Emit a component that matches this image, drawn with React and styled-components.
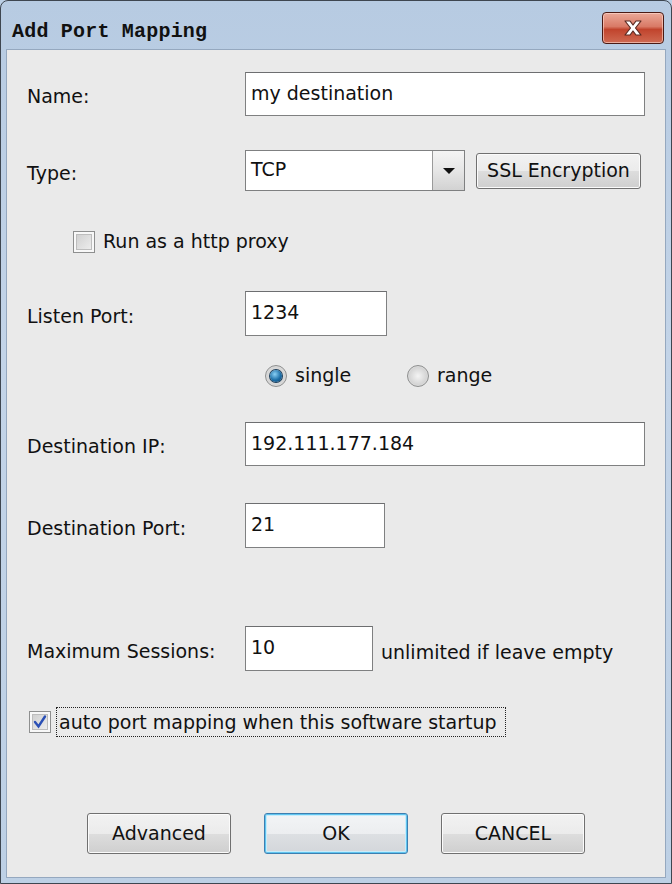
import styled, { createGlobalStyle } from "styled-components";

const GlobalStyle = createGlobalStyle`
  html, body {
    margin: 0;
    padding: 0;
    background: #bcd0e6;
  }
`;

const Window = styled.div`
  width: 672px;
  height: 884px;
  box-sizing: border-box;
  display: flex;
  flex-direction: column;
  background: linear-gradient(180deg, #b7cbe2 0%, #c3d4e8 40%, #bdd0e5 100%);
  border: 1px solid #3e4650;
  border-radius: 8px 8px 0 0;
  padding: 0 5px 5px 5px;
  font-family: "DejaVu Sans", "Liberation Sans", sans-serif;
`;

const TitleBar = styled.div`
  height: 48px;
  display: flex;
  align-items: flex-start;
  justify-content: space-between;
  flex-shrink: 0;
`;

const Title = styled.div`
  font-family: "Liberation Mono", "DejaVu Sans Mono", monospace;
  font-weight: bold;
  font-size: 20px;
  color: #111;
  margin: 19px 0 0 6px;
  letter-spacing: 0.2px;
`;

const CloseButton = styled.div`
  width: 62px;
  height: 32px;
  margin: 11px 2px 0 0;
  box-sizing: border-box;
  border: 1px solid #4a1a14;
  border-radius: 4px;
  background: linear-gradient(180deg, #eaa898 0%, #d97a66 45%, #c1442d 55%, #cf6a52 100%);
  box-shadow: inset 0 0 0 1px rgba(255, 220, 210, 0.6);
  display: flex;
  align-items: center;
  justify-content: center;
`;

const Client = styled.div`
  flex: 1;
  background: #eaeaea;
  border: 1px solid #95a8bf;
  display: flex;
  flex-direction: column;
  padding: 0 0 0 20px;
  color: #111;
  font-size: 19px;
`;

const Row = styled.div`
  display: flex;
  align-items: center;
  margin-top: ${({ $top }) => $top}px;
  margin-left: ${({ $indent }) => $indent || 0}px;
  gap: ${({ $gap }) => $gap || 0}px;
`;

const Label = styled.div`
  width: 218px;
  flex-shrink: 0;
  padding-top: 4px;
`;

const Field = styled.div`
  width: ${({ $w }) => $w}px;
  height: ${({ $h }) => $h}px;
  box-sizing: border-box;
  background: #fff;
  border: 1px solid #7f8081;
  border-top-color: #6d6e70;
  padding: 0 0 3px 5px;
  display: flex;
  align-items: center;
  font-size: 19px;
`;

const Select = styled.div`
  width: 220px;
  height: 41px;
  box-sizing: border-box;
  background: #fff;
  border: 1px solid #7f8081;
  display: flex;
`;

const SelectText = styled.div`
  flex: 1;
  display: flex;
  align-items: center;
  padding: 0 0 3px 5px;
`;

const SelectArrow = styled.div`
  width: 31px;
  border-left: 1px solid #9a9a9a;
  background: linear-gradient(180deg, #f4f4f4 0%, #e6e6e6 50%, #d2d2d2 100%);
  display: flex;
  align-items: center;
  justify-content: center;
  &::after {
    content: "";
    border-left: 6px solid transparent;
    border-right: 6px solid transparent;
    border-top: 6px solid #111;
  }
`;

const Button = styled.div`
  width: ${({ $w }) => $w}px;
  height: ${({ $h }) => $h}px;
  box-sizing: border-box;
  border: 1px solid ${({ $focus }) => ($focus ? "#3c7fb1" : "#707070")};
  border-radius: 3px;
  background: ${({ $focus }) =>
    $focus
      ? "linear-gradient(180deg, #f2f4f6 0%, #eceef0 50%, #dde0e3 51%, #d3d6da 100%)"
      : "linear-gradient(180deg, #f2f2f2 0%, #ebebeb 50%, #dddddd 51%, #cfcfcf 100%)"};
  box-shadow: ${({ $focus }) =>
    $focus ? "inset 0 0 0 1px #5fc4ef, inset 0 0 0 2px #c7ecfb" : "inset 0 0 0 1px #fbfbfb"};
  display: flex;
  align-items: center;
  justify-content: center;
  font-size: 19px;
  color: #111;
  padding-bottom: 2px;
`;

const Box = styled.div`
  width: 22px;
  height: 22px;
  box-sizing: border-box;
  border: 1px solid #8e8f8f;
  box-shadow: inset 0 0 0 2px #f8f8f8, inset 0 0 0 3px #bdbdbd;
  background-image: linear-gradient(135deg, #cbcbcb 0%, #f2f2f2 100%);
  display: flex;
  align-items: center;
  justify-content: center;
  flex-shrink: 0;
`;

const Radio = styled.div`
  width: 22px;
  height: 22px;
  box-sizing: border-box;
  border-radius: 50%;
  border: 1px solid #8e8f8f;
  background: radial-gradient(circle at 50% 50%, #f4f4f4 0%, #d5d5d5 60%, #ececec 100%);
  display: flex;
  align-items: center;
  justify-content: center;
  flex-shrink: 0;
  &::after {
    content: "";
    width: 12px;
    height: 12px;
    border-radius: 50%;
    display: ${({ $on }) => ($on ? "block" : "none")};
    background: radial-gradient(circle at 40% 35%, #8ad0f5 0%, #1d6fa8 55%, #0a3d66 100%);
    box-shadow: 0 0 0 1px #1b3d5a;
  }
`;

const Option = styled.div`
  display: flex;
  align-items: center;
  height: ${({ $h }) => $h || 22}px;
  gap: ${({ $gap }) => $gap ?? 8}px;
  width: ${({ $w }) => $w || "auto"};
`;

const OptionText = styled.span`
  line-height: 22px;
  padding-bottom: 2px;
`;

const FocusText = styled.span`
  border: 1px dotted #222;
  line-height: 22px;
  padding: 3px 8px 3px 2px;
`;

const Hint = styled.span`
  margin-left: 8px;
  padding-top: 6px;
`;

function CloseIcon() {
  return (
    <svg width="24" height="18" viewBox="0 0 24 18">
      <path
        d="M4 2 L9 2 L12 6 L15 2 L20 2 L14.5 9 L20 16 L15 16 L12 12 L9 16 L4 16 L9.5 9 Z"
        fill="#ffffff"
        stroke="#5a2a22"
        strokeWidth="1.2"
        strokeLinejoin="round"
      />
    </svg>
  );
}

function Check() {
  return (
    <svg width="16" height="16" viewBox="0 0 16 16">
      <path d="M3 8 L6.5 12.5 L13 2.5" fill="none" stroke="#2a4fb5" strokeWidth="2.4" strokeLinecap="round" />
    </svg>
  );
}

export default function App() {
  return (
    <>
      <GlobalStyle />
      <Window>
        <TitleBar>
          <Title>Add Port Mapping</Title>
          <CloseButton>
            <CloseIcon />
          </CloseButton>
        </TitleBar>
        <Client>
          <Row $top={22}>
            <Label>Name:</Label>
            <Field $w={400} $h={44}>my destination</Field>
          </Row>
          <Row $top={34}>
            <Label>Type:</Label>
            <Select>
              <SelectText>TCP</SelectText>
              <SelectArrow />
            </Select>
            <Button $w={165} $h={36} style={{ marginLeft: 11 }}>SSL Encryption</Button>
          </Row>
          <Row $top={40} $indent={46}>
            <Option>
              <Box />
              <OptionText>Run as a http proxy</OptionText>
            </Option>
          </Row>
          <Row $top={38}>
            <Label>Listen Port:</Label>
            <Field $w={142} $h={45}>1234</Field>
          </Row>
          <Row $top={29} $indent={238}>
            <Option $w="142px">
              <Radio $on />
              <OptionText>single</OptionText>
            </Option>
            <Option>
              <Radio />
              <OptionText>range</OptionText>
            </Option>
          </Row>
          <Row $top={35}>
            <Label>Destination IP:</Label>
            <Field $w={400} $h={44}>192.111.177.184</Field>
          </Row>
          <Row $top={37}>
            <Label>Destination Port:</Label>
            <Field $w={140} $h={45}>21</Field>
          </Row>
          <Row $top={78}>
            <Label>Maximum Sessions:</Label>
            <Field $w={128} $h={45}>10</Field>
            <Hint>unlimited if leave empty</Hint>
          </Row>
          <Row $top={36} $indent={2}>
            <Option $gap={5} $h={30}>
              <Box>
                <Check />
              </Box>
              <FocusText>auto port mapping when this software startup</FocusText>
            </Option>
          </Row>
          <Row $top={76} $indent={60} $gap={33}>
            <Button $w={144} $h={41}>Advanced</Button>
            <Button $w={144} $h={41} $focus>OK</Button>
            <Button $w={144} $h={41}>CANCEL</Button>
          </Row>
        </Client>
      </Window>
    </>
  );
}
